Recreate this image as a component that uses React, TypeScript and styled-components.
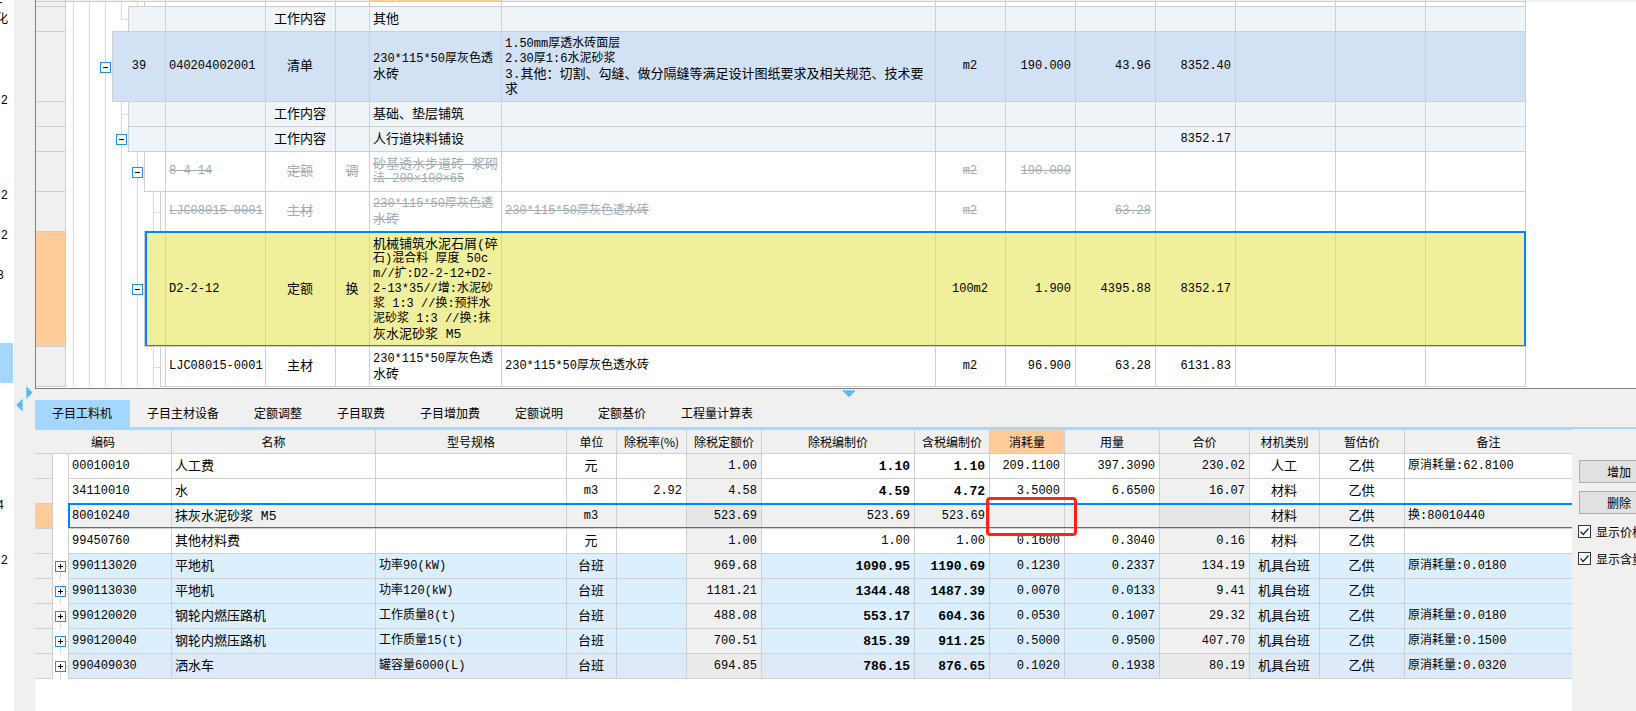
import React, { useState } from "react";
import styled, { createGlobalStyle, css } from "styled-components";

const LINE = "#cfcfcf";
const CHROME = "#f0f0f0";
const PEACH = "#ffcb98";
const SELECT = "#0084ff";
const TAB_BLUE = "#a3d7ff";

const GlobalStyle = createGlobalStyle`
  *, *::before, *::after { box-sizing: border-box; }
  body {
    margin: 0;
    background: #fff;
    color: #000;
    font: 12px/15px "Noto Sans CJK SC", sans-serif;
  }
`;

const Page = styled.div`
  display: flex;
  min-height: 100vh;
  overflow: hidden;
`;

/* ---------- left strip and gutter ---------- */

const Strip = styled.div`
  flex: 0 0 14px;
  overflow: hidden;
  background: #fff;
  font: 12px/15px "Liberation Mono", "Noto Sans CJK SC", monospace;
`;

const StripItem = styled.div<{ $h: number; $pad?: number; $active?: boolean }>`
  display: flex;
  align-items: center;
  justify-content: flex-end;
  height: ${(p) => p.$h}px;
  margin-right: 1px;
  padding-right: ${(p) => p.$pad ?? 5}px;
  background: ${(p) => (p.$active ? TAB_BLUE : "transparent")};
`;

const Gutter = styled.div`
  flex: 0 0 21px;
  padding: 385px 0 0 1px;
  background: ${CHROME};
`;

const Main = styled.main`
  flex: 1;
  min-width: 0;
  display: flex;
  flex-direction: column;
`;

/* ---------- shared table parts ---------- */

const Table = styled.table`
  width: 100%;
  table-layout: fixed;
  border-collapse: separate;
  border-spacing: 0;
  font: 13px/15px "Liberation Mono", "Noto Sans CJK SC", monospace;
`;

const Row = styled.tr<{ $bg?: string }>`
  position: relative;
  background: ${(p) => p.$bg ?? "#fff"};
`;

type Align = "left" | "center" | "right";

const Cell = styled.td<{ $h: number; $align?: Align; $bg?: string; $struck?: boolean }>`
  height: ${(p) => p.$h}px;
  padding: 0 4px 0 3px;
  border-right: 1px solid ${LINE};
  border-bottom: 1px solid ${LINE};
  text-align: ${(p) => p.$align ?? "left"};
  vertical-align: middle;
  white-space: nowrap;
  background: ${(p) => p.$bg ?? "transparent"};
  ${(p) => p.$struck && css`color: #a0abb4;`}
`;

const RowHead = styled.th<{ $h: number; $active?: boolean }>`
  height: ${(p) => p.$h}px;
  padding: 0;
  border-right: 1px solid ${LINE};
  border-bottom: 1px solid ${LINE};
  background: ${(p) => (p.$active ? PEACH : CHROME)};
`;

const Line = styled.span<{ $size: number; $bold?: boolean; $struck?: boolean }>`
  display: block;
  font-size: ${(p) => p.$size}px;
  font-weight: ${(p) => (p.$bold ? 700 : 400)};
  text-decoration: ${(p) => (p.$struck ? "line-through" : "none")};
`;

const SelectionFrame = styled.span<{ $left: number; $right: number }>`
  position: absolute;
  top: -1px;
  right: ${(p) => p.$right}px;
  bottom: 1px;
  left: ${(p) => p.$left}px;
  border: solid ${SELECT};
  border-width: 2px ${(p) => (p.$right ? 2 : 0)}px 1px 2px;
  pointer-events: none;
`;

const ToggleButton = styled.button`
  flex: none;
  display: block;
  width: 11px;
  height: 11px;
  padding: 0;
  border: 1px solid #1e95d4;
  background: #fff;
`;

const Toggle = ({ open, label }: { open: boolean; label: string }) => (
  <ToggleButton type="button" aria-expanded={open} aria-label={label}>
    <svg width="9" height="9" viewBox="0 0 9 9" display="block">
      <path d={open ? "M2 4.5h5" : "M2 4.5h5M4.5 2v5"} stroke="#000" strokeWidth="1" />
    </svg>
  </ToggleButton>
);

/* Lines dominated by digits are set a step smaller than Chinese ones. */
const sizeOf = (text: string, bold?: boolean) => {
  if (bold) return 13;
  const wide = (text.match(/[\u3000-\uffef]/g) || []).length;
  return wide > text.length - wide ? 13 : 12;
};

const Lines = ({ text, bold, struck }: { text?: string; bold?: boolean; struck?: boolean }) => (
  <>
    {(text ? text.split("\n") : []).map((t, i) => (
      <Line key={i} $size={sizeOf(t, bold)} $bold={bold} $struck={struck}>
        {t}
      </Line>
    ))}
  </>
);

/* ---------- upper grid ---------- */

const UpperPane = styled.section`
  padding-bottom: 1px;
  border-left: 1px solid #808086;
  border-bottom: 1px solid #808086;
  background: #fff;
`;

const ThinHead = styled.th<{ $active?: boolean; $filler?: boolean }>`
  height: 2px;
  padding: 0;
  font-size: 0;
  line-height: 0;
  background: ${(p) => (p.$active ? PEACH : CHROME)};
  border-bottom: 1px solid ${(p) => (p.$filler ? CHROME : LINE)};
  border-right: 1px solid ${(p) => (p.$filler ? CHROME : LINE)};
`;

const TreeCell = styled.td<{ $h: number }>`
  height: ${(p) => p.$h}px;
  padding: 0;
  border-right: 1px solid ${LINE};
  background: #fff;
`;

const Filler = styled.td`
  padding: 0;
  background: #fff;
`;

const Branch = styled.div<{ $h: number }>`
  display: flex;
  height: ${(p) => p.$h}px;
`;

type GuideKind = "line" | "elbow" | "tee" | "toggle";

const v = (size: string) => `linear-gradient(#dadada, #dadada) right 7px top / 1px ${size} no-repeat`;
const h = "linear-gradient(#dadada, #dadada) right center / 8px 1px no-repeat";
const guideBackground: Record<GuideKind, string> = {
  line: v("100%"),
  elbow: `${v("50%")}, ${h}`,
  tee: `${v("100%")}, ${h}`,
  toggle: `${v("100%")}, ${h}`,
};

const Guide = styled.span<{ $kind: GuideKind }>`
  flex: 0 0 16px;
  display: flex;
  align-items: center;
  justify-content: flex-end;
  padding-right: 2px;
  background: ${(p) => guideBackground[p.$kind]};
  &:first-child { flex-basis: 15px; }
`;

const Node = styled.span<{ $bg: string }>`
  flex: 1;
  display: flex;
  align-items: center;
  justify-content: center;
  margin-left: -1px;
  border-left: 1px solid ${LINE};
  border-bottom: 1px solid ${LINE};
  box-shadow: 0 -1px 0 ${LINE};
  background: ${(p) => p.$bg};
  font-size: 12px;
`;

type UpperRow = {
  h: number;
  depth: number;
  end?: GuideKind;
  bg?: string;
  struck?: boolean;
  selected?: boolean;
  no?: string;
  code?: string;
  kind?: string;
  mark?: string;
  name?: string;
  spec?: string;
  unit?: string;
  qty?: string;
  price?: string;
  total?: string;
};

const PALE = "#eff4f9";
const upperRows: UpperRow[] = [
  { h: 5, depth: 5 },
  { h: 25, depth: 4, end: "elbow", bg: PALE, kind: "工作内容", name: "其他" },
  {
    h: 70, depth: 3, end: "toggle", bg: "#d2e1f3", no: "39", code: "040204002001", kind: "清单",
    name: "230*115*50厚灰色透\n水砖",
    spec: "1.50mm厚透水砖面层\n2.30厚1:6水泥砂浆\n3.其他：切割、勾缝、做分隔缝等满足设计图纸要求及相关规范、技术要\n求",
    unit: "m2", qty: "190.000", price: "43.96", total: "8352.40",
  },
  { h: 25, depth: 4, end: "tee", bg: PALE, kind: "工作内容", name: "基础、垫层铺筑" },
  { h: 25, depth: 4, end: "toggle", bg: PALE, kind: "工作内容", name: "人行道块料铺设", total: "8352.17" },
  {
    h: 40, depth: 5, end: "toggle", struck: true, code: "8-4-14", kind: "定额", mark: "调",
    name: "砂基透水步道砖 浆砌\n法 200×100×65", unit: "m2", qty: "190.000",
  },
  {
    h: 40, depth: 6, end: "tee", struck: true, code: "LJC08015-0001", kind: "主材",
    name: "230*115*50厚灰色透\n水砖", spec: "230*115*50厚灰色透水砖", unit: "m2", price: "63.28",
  },
  {
    h: 115, depth: 5, end: "toggle", bg: "#f0f09c", selected: true, code: "D2-2-12", kind: "定额", mark: "换",
    name: "机械铺筑水泥石屑(碎\n石)混合料 厚度 50c\nm//扩:D2-2-12+D2-\n2-13*35//增:水泥砂\n浆 1:3 //换:预拌水\n泥砂浆 1:3 //换:抹\n灰水泥砂浆 M5",
    unit: "100m2", qty: "1.900", price: "4395.88", total: "8352.17",
  },
  {
    h: 40, depth: 6, end: "tee", code: "LJC08015-0001", kind: "主材",
    name: "230*115*50厚灰色透\n水砖", spec: "230*115*50厚灰色透水砖", unit: "m2", qty: "96.900", price: "63.28", total: "6131.83",
  },
];

const upperCols: (number | undefined)[] = [30, 100, 100, 70, 34, 132, undefined, 70, 70, 80, 80, 100, 90, 100, 110];

const UpperGrid = () => (
  <UpperPane>
    <Table>
      <colgroup>
        {upperCols.map((w, i) => (
          <col key={i} width={w} />
        ))}
      </colgroup>
      <thead>
        <tr>
          {upperCols.map((_, i) => (
            <ThinHead key={i} $active={i === 5} $filler={i === upperCols.length - 1} />
          ))}
        </tr>
      </thead>
      <tbody>
        {upperRows.map((r, i) => {
          const cell = { $h: r.h, $struck: r.struck };
          const kinds: GuideKind[] = Array.from({ length: r.depth }, (_, d) =>
            d === r.depth - 1 && r.end ? r.end : "line",
          );
          return (
            <Row key={i} $bg={r.bg}>
              <RowHead $h={r.h} $active={r.selected} />
              <TreeCell $h={r.h}>
                <Branch $h={r.h}>
                  {kinds.map((k, d) => (
                    <Guide key={d} $kind={k}>
                      {k === "toggle" && <Toggle open label={`收起 ${r.code ?? r.name}`} />}
                    </Guide>
                  ))}
                  <Node $bg={r.bg ?? "#fff"}>{r.no}</Node>
                </Branch>
              </TreeCell>
              <Cell {...cell}><Lines text={r.code} struck={r.struck} /></Cell>
              <Cell {...cell} $align="center"><Lines text={r.kind} struck={r.struck} /></Cell>
              <Cell {...cell} $align="center"><Lines text={r.mark} struck={r.struck} /></Cell>
              <Cell {...cell}><Lines text={r.name} struck={r.struck} /></Cell>
              <Cell {...cell}><Lines text={r.spec} struck={r.struck} /></Cell>
              <Cell {...cell} $align="center"><Lines text={r.unit} struck={r.struck} /></Cell>
              <Cell {...cell} $align="right"><Lines text={r.qty} struck={r.struck} /></Cell>
              <Cell {...cell} $align="right"><Lines text={r.price} struck={r.struck} /></Cell>
              <Cell {...cell} $align="right"><Lines text={r.total} struck={r.struck} /></Cell>
              <Cell {...cell} />
              <Cell {...cell} />
              <Cell {...cell}>{r.selected && <SelectionFrame $left={109} $right={110} />}</Cell>
              <Filler />
            </Row>
          );
        })}
      </tbody>
    </Table>
  </UpperPane>
);

/* ---------- splitter and tabs ---------- */

const Splitter = styled.div`
  display: flex;
  justify-content: center;
  height: 11px;
  padding: 1px 0 0 27px;
  background: ${CHROME};
`;

const TabList = styled.div`
  display: flex;
  height: 29px;
  border-bottom: 2px solid ${TAB_BLUE};
  background: ${CHROME};
`;

const Tab = styled.button<{ $active: boolean }>`
  padding: 0 18px 2px 17px;
  border: 0;
  background: ${(p) => (p.$active ? TAB_BLUE : "transparent")};
  color: #000;
  font: inherit;
  white-space: nowrap;
`;

const tabs = ["子目工料机", "子目主材设备", "定额调整", "子目取费", "子目增加费", "定额说明", "定额基价", "工程量计算表"];

/* ---------- lower grid ---------- */

const LowerPane = styled.section`
  flex: 1;
  display: flex;
`;

const LowerTableBox = styled.div`
  flex: 1;
  min-width: 0;
  background: #fff;
`;

const HeadCell = styled.th<{ $active?: boolean }>`
  height: 25px;
  padding: 0;
  border: solid ${LINE};
  border-width: 1px 1px 1px 0;
  background: ${(p) => (p.$active ? PEACH : CHROME)};
  font: 12px/15px "Noto Sans CJK SC", sans-serif;
  white-space: nowrap;
  &:last-child { border-right: 0; }
`;

const NoteCell = styled(Cell)`
  border-right: 0;
`;

const TwigCell = styled.td<{ $twig?: boolean }>`
  padding: 0 0 0 2px;
  border-right: 1px solid ${LINE};
  vertical-align: middle;
  background: ${(p) =>
    p.$twig
      ? "linear-gradient(#dadada, #dadada) 7px bottom / 1px 50% no-repeat, linear-gradient(#dadada, #dadada) right center / 3px 1px no-repeat, #fff"
      : "#fff"};
`;

const RedMark = styled.span`
  position: absolute;
  inset: -7px -13px -8px -4px;
  z-index: 1;
  border: 3px solid #ff2412;
  border-radius: 4px;
  pointer-events: none;
`;

const MarkCell = styled(Cell)`
  position: relative;
`;

type LowerRow = {
  group?: boolean;
  bg?: string;
  grey?: string;
  selected?: boolean;
  bold?: boolean;
  v: string[];
};

const SKY = "#dcefff";
const lowerRows: LowerRow[] = [
  { bold: true, v: ["00010010", "人工费", "", "元", "", "1.00", "1.10", "1.10", "209.1100", "397.3090", "230.02", "人工", "乙供", "原消耗量:62.8100"] },
  { bold: true, v: ["34110010", "水", "", "m3", "2.92", "4.58", "4.59", "4.72", "3.5000", "6.6500", "16.07", "材料", "乙供", ""] },
  { selected: true, bg: "#f0f0f0", grey: "#e6e6e6", v: ["80010240", "抹灰水泥砂浆 M5", "", "m3", "", "523.69", "523.69", "523.69", "", "", "", "材料", "乙供", "换:80010440"] },
  { v: ["99450760", "其他材料费", "", "元", "", "1.00", "1.00", "1.00", "0.1600", "0.3040", "0.16", "材料", "乙供", ""] },
  { group: true, bold: true, bg: SKY, v: ["990113020", "平地机", "功率90(kW)", "台班", "", "969.68", "1090.95", "1190.69", "0.1230", "0.2337", "134.19", "机具台班", "乙供", "原消耗量:0.0180"] },
  { group: true, bold: true, bg: SKY, v: ["990113030", "平地机", "功率120(kW)", "台班", "", "1181.21", "1344.48", "1487.39", "0.0070", "0.0133", "9.41", "机具台班", "乙供", ""] },
  { group: true, bold: true, bg: SKY, v: ["990120020", "钢轮内燃压路机", "工作质量8(t)", "台班", "", "488.08", "553.17", "604.36", "0.0530", "0.1007", "29.32", "机具台班", "乙供", "原消耗量:0.0180"] },
  { group: true, bold: true, bg: SKY, v: ["990120040", "钢轮内燃压路机", "工作质量15(t)", "台班", "", "700.51", "815.39", "911.25", "0.5000", "0.9500", "407.70", "机具台班", "乙供", "原消耗量:0.1500"] },
  { group: true, bold: true, bg: "#deeaf8", grey: "#ebebeb", v: ["990409030", "洒水车", "罐容量6000(L)", "台班", "", "694.85", "786.15", "876.65", "0.1020", "0.1938", "80.19", "机具台班", "乙供", "原消耗量:0.0320"] },
];

const lowerCols: (number | undefined)[] = [18, 16, 103, 204, 191, 50, 70, 75, 153, 75, 75, 95, 90, 70, 85, undefined];
const lowerHeads = ["名称", "型号规格", "单位", "除税率(%)", "除税定额价", "除税编制价", "含税编制价", "消耗量", "用量", "合价", "材机类别", "暂估价", "备注"];
const lowerAlign: Align[] = ["left", "left", "left", "center", "right", "right", "right", "right", "right", "right", "right", "center", "center", "left"];

const LowerGrid = () => (
  <Table>
    <colgroup>
      {lowerCols.map((w, i) => (
        <col key={i} width={w} />
      ))}
    </colgroup>
    <thead>
      <tr>
        <HeadCell colSpan={3}>编码</HeadCell>
        {lowerHeads.map((t) => (
          <HeadCell key={t} $active={t === "消耗量"}>{t}</HeadCell>
        ))}
      </tr>
    </thead>
    <tbody>
      {lowerRows.map((r) => (
        <Row key={r.v[0]} $bg={r.bg}>
          <RowHead $h={25} $active={r.selected} />
          <TwigCell $twig={r.group}>
            {r.group && <Toggle open={false} label={`展开 ${r.v[0]}`} />}
          </TwigCell>
          {r.v.map((t, i) => {
            const props = {
              $h: 25,
              $align: lowerAlign[i],
              $bg: i === 5 || i === 10 ? r.grey ?? CHROME : undefined,
            };
            const body = <Lines text={t} bold={r.bold && (i === 6 || i === 7)} />;
            if (i === 13)
              return (
                <NoteCell key={i} {...props}>
                  {body}
                  {r.selected && <SelectionFrame $left={33} $right={0} />}
                </NoteCell>
              );
            if (r.selected && i === 8) return <MarkCell key={i} {...props}><RedMark /></MarkCell>;
            return <Cell key={i} {...props}>{body}</Cell>;
          })}
        </Row>
      ))}
    </tbody>
  </Table>
);

/* ---------- right-hand tools ---------- */

const Tools = styled.aside`
  flex: 0 0 64px;
  min-width: 0;
  overflow: hidden;
  display: flex;
  flex-direction: column;
  align-items: flex-start;
  padding: 31px 0 0 6px;
  background: ${CHROME};
`;

const ToolButton = styled.button`
  flex: none;
  width: 80px;
  height: 23px;
  margin: 0 0 8px 1px;
  padding: 0;
  border: 1px solid #adadad;
  background: #e1e1e1;
  color: #000;
  font: inherit;
`;

const CheckLabel = styled.label`
  display: flex;
  align-items: center;
  gap: 5px;
  height: 15px;
  margin: 2px 0 10px;
  white-space: nowrap;
`;

const CheckBox = styled.input`
  appearance: none;
  flex: none;
  width: 13px;
  height: 13px;
  margin: 0;
  border: 1px solid #333;
  background: #fff;
`;

const CheckWrap = styled.span`
  display: grid;
  > * { grid-area: 1 / 1; }
  > svg { position: relative; pointer-events: none; }
`;

const Check = ({ text }: { text: string }) => {
  const [on, setOn] = useState(true);
  return (
    <CheckLabel>
      <CheckWrap>
        <CheckBox type="checkbox" checked={on} onChange={() => setOn(!on)} />
        <svg width="13" height="13" viewBox="0 0 13 13" fill="none">
          {on && <path d="M2.5 6.5l2.7 3 5.3-6" stroke="#222" strokeWidth="1.2" />}
        </svg>
      </CheckWrap>
      {text}
    </CheckLabel>
  );
};

export default function App() {
  const [active, setActive] = useState(0);
  return (
    <>
      <GlobalStyle />
      <Page lang="zh-CN">
        <Strip>
          <StripItem $h={6} $pad={9}>-</StripItem>
          <StripItem $h={28}>化</StripItem>
          <StripItem $h={134}>2</StripItem>
          <StripItem $h={56}>2</StripItem>
          <StripItem $h={24}>2</StripItem>
          <StripItem $h={56} $pad={9}>3</StripItem>
          <StripItem $h={39} />
          <StripItem $h={40} $active />
          <StripItem $h={95} />
          <StripItem $h={56} $pad={9}>4</StripItem>
          <StripItem $h={54}>2</StripItem>
        </Strip>
        <Gutter>
          <svg width="20" height="28" viewBox="0 0 20 28" fill="none" display="block">
            <path d="M11 0l7 7.5-7 7.5z" fill="#b4e0f8" />
            <path d="M11.500 3l4.500 4.500-4.500 4.500M11.500 6l2 1.500-2 1.500" stroke="#3aa9e4" strokeWidth="1.400" />
            <path d="M8 12.500l-8 7.500 8 7.500z" fill="#b4e0f8" />
            <path d="M7.500 15.500l-4.500 4.500 4.500 4.500M7.500 18.500l-2 1.500 2 1.500" stroke="#3aa9e4" strokeWidth="1.400" />
          </svg>
        </Gutter>
        <Main>
          <UpperGrid />
          <Splitter>
            <svg width="16" height="8" viewBox="0 0 16 8" fill="none">
              <path d="M0 0h16l-8 8z" fill="#b4e0f8" />
              <path d="M3 .5l5 5 5-5M6 .5l2 2 2-2" stroke="#3aa9e4" strokeWidth="1.400" />
            </svg>
          </Splitter>
          <TabList role="tablist">
            {tabs.map((t, i) => (
              <Tab key={t} type="button" role="tab" aria-selected={i === active} $active={i === active} onClick={() => setActive(i)}>
                {t}
              </Tab>
            ))}
          </TabList>
          <LowerPane>
            <LowerTableBox>
              <LowerGrid />
            </LowerTableBox>
            <Tools>
              <ToolButton type="button">增加</ToolButton>
              <ToolButton type="button">删除</ToolButton>
              <Check text="显示价格" />
              <Check text="显示含量" />
            </Tools>
          </LowerPane>
        </Main>
      </Page>
    </>
  );
}
